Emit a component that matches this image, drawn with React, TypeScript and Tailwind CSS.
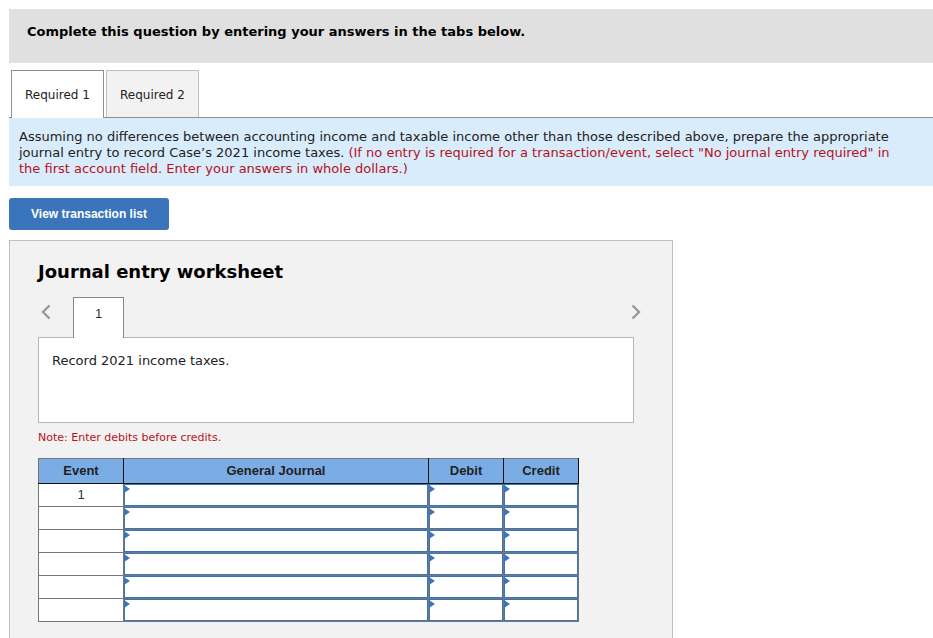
import { useState } from "react";

const QUESTION_TABS = ["Required 1", "Required 2"];
const ROW_COUNT = 6;
const ENTRY_COLUMNS = ["General Journal", "Debit", "Credit"];

function Chevron({ direction }: { direction: "left" | "right" }) {
  return (
    <svg width="10" height="16" viewBox="0 0 10 16" fill="none" aria-hidden="true">
      <path
        d={direction === "left" ? "M8.5 1.5 2 8l6.5 6.5" : "M1.5 1.5 8 8l-6.5 6.5"}
        stroke="#999999"
        strokeWidth="2.4"
      />
    </svg>
  );
}

interface EntryCellProps {
  label: string;
  value: string;
  onChange: (next: string) => void;
}

/** Editable worksheet cell with the small marker in its top left corner. */
function EntryCell({ label, value, onChange }: EntryCellProps) {
  return (
    <td className="relative border border-[#777777] bg-white p-0">
      <input
        type="text"
        aria-label={label}
        value={value}
        onChange={(e) => onChange(e.target.value)}
        className="block h-[22px] w-full border border-[#3a75bb] bg-white px-2 text-[13px] outline-none"
      />
      <svg
        className="pointer-events-none absolute top-px left-0"
        width="6"
        height="8"
        viewBox="0 0 6 8"
        aria-hidden="true"
      >
        <path d="M0 0 6 4 0 8Z" fill="#3a75bb" />
      </svg>
    </td>
  );
}

function JournalTable() {
  const [cells, setCells] = useState<Record<string, string>>({});

  return (
    <table className="mt-3 w-full max-w-[541px] table-fixed border-collapse text-center font-['Liberation_Sans',Arial,sans-serif] text-[13px] text-[#333333]">
      <colgroup>
        <col className="w-[85px]" />
        <col />
        <col className="w-[75px]" />
        <col className="w-[75px]" />
      </colgroup>
      <thead>
        <tr className="h-[25px] bg-[#7aace5] text-[#222222]">
          <th className="border border-t-[#777777] border-r-[#111111] border-b-[#111111] border-l-[#777777] p-0">
            Event
          </th>
          {ENTRY_COLUMNS.map((name) => (
            <th key={name} className="border border-[#111111] border-t-[#777777] p-0">
              {name}
            </th>
          ))}
        </tr>
      </thead>
      <tbody>
        {Array.from({ length: ROW_COUNT }, (_, row) => (
          <tr key={row} className="h-[23px]">
            <td className="border border-[#777777] bg-white p-0 leading-5">
              {row === 0 ? "1" : ""}
            </td>
            {ENTRY_COLUMNS.map((name) => {
              const key = `${row}-${name}`;
              return (
                <EntryCell
                  key={key}
                  label={`${name}, row ${row + 1}`}
                  value={cells[key] ?? ""}
                  onChange={(next) => setCells((c) => ({ ...c, [key]: next }))}
                />
              );
            })}
          </tr>
        ))}
      </tbody>
    </table>
  );
}

function Worksheet() {
  return (
    <section className="mt-2.5 w-full max-w-[664px] border border-[#c0c0c0] bg-[#f2f2f2] pt-[19px] pr-[38px] pb-10 pl-7">
      <h2 className="text-[18px] leading-6 font-bold text-black">Journal entry worksheet</h2>

      <div className="mt-[13px] flex items-start">
        <button type="button" aria-label="Previous entry" className="mt-[7px] ml-[3px]">
          <Chevron direction="left" />
        </button>
        {/* the selected tab overlaps the box border below by one pixel */}
        <button
          type="button"
          className="relative -mb-px ml-[22px] h-[41px] w-[51px] border border-b-0 border-[#888888] bg-white pb-2 font-['Liberation_Sans',Arial,sans-serif] text-[13px] text-[#333333]"
        >
          1
        </button>
        <button type="button" aria-label="Next entry" className="mt-[7px] -mr-[7px] ml-auto">
          <Chevron direction="right" />
        </button>
      </div>

      <div className="h-[86px] border border-[#b5b5b5] bg-white px-[13px] py-[15px] text-[13px] leading-4 text-[#222222]">
        Record 2021 income taxes.
      </div>

      <p className="mt-[7px] text-[11px] leading-4 text-[#b5121b]">
        Note: Enter debits before credits.
      </p>

      <JournalTable />
    </section>
  );
}

export default function App() {
  const [active, setActive] = useState(0);

  return (
    <main className="h-screen overflow-hidden bg-white pt-[9px] pl-[9px] font-['DejaVu_Sans',Verdana,sans-serif] text-[13px] text-[#222222]">
      <header className="h-[54px] bg-[#e0e0e0] px-[18px] pt-[15px] leading-4 font-bold text-black">
        Complete this question by entering your answers in the tabs below.
      </header>

      <div role="tablist" className="mt-[7px] flex gap-0.5 border-b border-[#8e8e93] pl-0.5">
        {QUESTION_TABS.map((label, i) => (
          <button
            key={label}
            type="button"
            role="tab"
            aria-selected={active === i}
            onClick={() => setActive(i)}
            className={
              active === i
                ? "relative -mb-px h-12 w-[93px] border border-b-0 border-[#8e8e93] bg-white text-[12px]"
                : "h-[47px] w-[93px] border border-b-0 border-[#c0c0c0] bg-[#f2f2f2] pt-0.5 text-[12px]"
            }
          >
            {label}
          </button>
        ))}
      </div>

      <p className="bg-[#d9ecfb] pt-[11px] pr-6 pb-[9px] pl-2.5 leading-4">
        Assuming no differences between accounting income and taxable income other than those
        described above, prepare the appropriate journal entry to record Case’s 2021 income
        taxes.{" "}
        <span className="text-[#b5121b]">
          (If no entry is required for a transaction/event, select "No journal entry required" in
          the first account field. Enter your answers in whole dollars.)
        </span>
      </p>

      <button
        type="button"
        className="mt-3 block h-8 w-40 rounded-[3px] bg-[#3a75bb] font-['Liberation_Sans',Arial,sans-serif] text-[12px] font-bold text-white"
      >
        View transaction list
      </button>

      <Worksheet />
    </main>
  );
}
